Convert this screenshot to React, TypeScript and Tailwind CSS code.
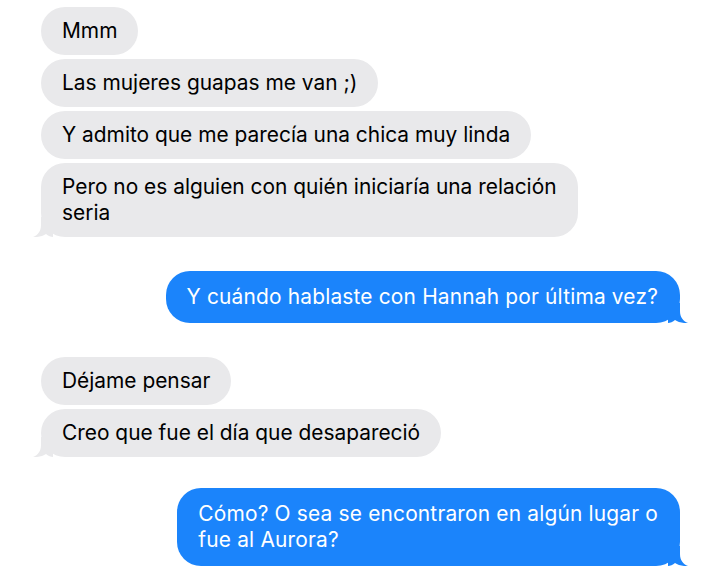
import React from 'react';

type Msg = { from: 'them' | 'me'; lines: string[]; tail?: boolean };

const groups: { top: string; msgs: Msg[] }[] = [
  {
    top: 'mt-0',
    msgs: [
      { from: 'them', lines: ['Mmm'] },
      { from: 'them', lines: ['Las mujeres guapas me van ;)'] },
      { from: 'them', lines: ['Y admito que me parecía una chica muy linda'] },
      { from: 'them', lines: ['Pero no es alguien con quién iniciaría una relación', 'seria'], tail: true },
    ],
  },
  { top: 'mt-[34px]', msgs: [{ from: 'me', lines: ['Y cuándo hablaste con Hannah por última vez?'], tail: true }] },
  {
    top: 'mt-[34px]',
    msgs: [
      { from: 'them', lines: ['Déjame pensar'] },
      { from: 'them', lines: ['Creo que fue el día que desapareció'], tail: true },
    ],
  },
  {
    top: 'mt-[31px]',
    msgs: [{ from: 'me', lines: ['Cómo? O sea se encontraron en algún lugar o', 'fue al Aurora?'], tail: true }],
  },
];

function Tail({ side, color }: { side: 'left' | 'right'; color: string }) {
  // la cola del globo, dibujada en la esquina inferior
  const d = 'M8 0 L8 8 C8 14 5 18 0 20 C5 20.5 10 19 13 17 C15 19 18 20 20 20 L20 0 Z';
  return (
    <svg
      width="20"
      height="20"
      viewBox="0 0 20 20"
      className={side === 'left' ? 'absolute -left-2 bottom-0' : 'absolute -right-2 bottom-0 -scale-x-100'}
    >
      <path d={d} fill={color} />
    </svg>
  );
}

function Bubble({ msg }: { msg: Msg }) {
  const mine = msg.from === 'me';
  return (
    <div className={mine ? 'flex justify-end' : 'flex justify-start'}>
      <div
        className={
          mine
            ? 'relative whitespace-nowrap rounded-3xl bg-[#1b84fb] pl-[21px] pr-[22px] py-[13px] tracking-[0.18px] text-white'
            : 'relative whitespace-nowrap rounded-3xl bg-[#e9e9eb] px-[21px] py-[11px] text-black'
        }
      >
        <span className="relative z-10">
          {msg.lines.map((l, i) => (
            <React.Fragment key={i}>
              {i > 0 && <br />}
              {l}
            </React.Fragment>
          ))}
        </span>
        {msg.tail && <Tail side={mine ? 'right' : 'left'} color={mine ? '#1b84fb' : '#e9e9eb'} />}
      </div>
    </div>
  );
}

export default function App() {
  return (
    <div
      className="w-[720px] h-[582px] bg-white pt-[7px] pl-[41px] pr-[40px] overflow-hidden text-[20.9px] leading-[26px]"
      style={{ fontFamily: 'Inter, "Noto Sans", sans-serif' }}
    >
      <div className="flex flex-col">
        {groups.map((g, i) => (
          <div key={i} className={`flex flex-col gap-[4px] ${g.top}`}>
            {g.msgs.map((m, j) => (
              <Bubble key={j} msg={m} />
            ))}
          </div>
        ))}
      </div>
    </div>
  );
}
